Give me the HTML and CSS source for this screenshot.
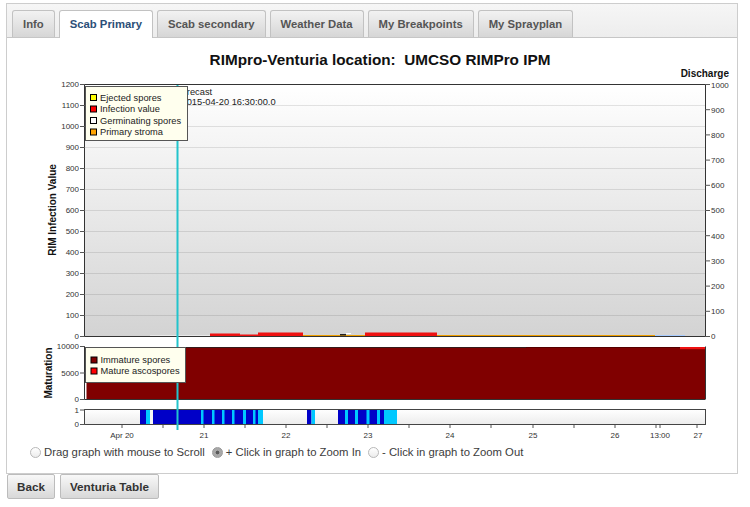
FILE: index.html
```html
<!DOCTYPE html>
<html>
<head>
<meta charset="utf-8">
<title>RIMpro-Venturia</title>
<link rel="stylesheet" href="styles.css">
</head>
<body>
<div class="tabs">
  <ul class="tabnav">
    <li class="tab">Info</li>
    <li class="tab active">Scab Primary</li>
    <li class="tab">Scab secondary</li>
    <li class="tab">Weather Data</li>
    <li class="tab">My Breakpoints</li>
    <li class="tab">My Sprayplan</li>
  </ul>
  <div class="panel">
    <h1 class="title">RIMpro-Venturia location:&nbsp; UMCSO RIMPro IPM</h1>
    <svg class="chart" width="715" height="376" viewBox="20 66 715 376" xmlns="http://www.w3.org/2000/svg">
      <defs>
        <linearGradient id="plotbg" x1="0" y1="0" x2="0" y2="1">
          <stop offset="0" stop-color="#ffffff"/>
          <stop offset="1" stop-color="#d3d3d3"/>
        </linearGradient>
        <linearGradient id="stripbg" x1="0" y1="0" x2="0" y2="1">
          <stop offset="0" stop-color="#ffffff"/>
          <stop offset="1" stop-color="#ececec"/>
        </linearGradient>
      </defs>

      <!-- main plot -->
      <rect x="85" y="84.5" width="620" height="252" fill="url(#plotbg)"/>
      <g class="grid">
        <line x1="85" x2="705" y1="105.5" y2="105.5"/>
        <line x1="85" x2="705" y1="126.5" y2="126.5"/>
        <line x1="85" x2="705" y1="147.5" y2="147.5"/>
        <line x1="85" x2="705" y1="168.5" y2="168.5"/>
        <line x1="85" x2="705" y1="189.5" y2="189.5"/>
        <line x1="85" x2="705" y1="210.5" y2="210.5"/>
        <line x1="85" x2="705" y1="231.5" y2="231.5"/>
        <line x1="85" x2="705" y1="252.5" y2="252.5"/>
        <line x1="85" x2="705" y1="273.5" y2="273.5"/>
        <line x1="85" x2="705" y1="294.5" y2="294.5"/>
        <line x1="85" x2="705" y1="315.5" y2="315.5"/>
      </g>

      <text class="note" x="176" y="91.5" dy="0.35em">Forecast</text>
      <text class="note" x="181.5" y="101.5" dy="0.35em">2015-04-20 16:30:00.0</text>

      <!-- series near zero -->
      <line x1="150" x2="210" y1="336" y2="336" stroke="#ffffff" stroke-width="1"/>
      <rect x="303" y="335" width="134" height="1.5" fill="#f0a000"/>
      <rect x="437" y="335" width="218" height="1.5" fill="#f0a000"/>
      <rect x="655" y="335" width="30" height="1.5" fill="#a8ccff"/>
      <rect x="210" y="333.5" width="30" height="3" fill="#ee1111"/>
      <rect x="240" y="334.5" width="18" height="2" fill="#ee1111"/>
      <rect x="258" y="332.5" width="45" height="4" fill="#ee1111"/>
      <rect x="365" y="332.5" width="72" height="4" fill="#ee1111"/>
      <rect x="340" y="334" width="6" height="1.5" fill="#222222"/>
      <rect x="346" y="333" width="5" height="1" fill="#ffffff"/>

      <g class="axis">
        <line x1="85" x2="705" y1="84.5" y2="84.5"/>
        <line x1="85" x2="705" y1="336.5" y2="336.5"/>
        <line x1="84.5" x2="84.5" y1="84.5" y2="336.5"/>
        <line x1="705.5" x2="705.5" y1="84.5" y2="336.5"/>
      </g>

      <!-- left ticks/labels -->
      <g class="ticks">
        <line x1="80" x2="85" y1="84.5" y2="84.5"/>
        <line x1="80" x2="85" y1="105.5" y2="105.5"/>
        <line x1="80" x2="85" y1="126.5" y2="126.5"/>
        <line x1="80" x2="85" y1="147.5" y2="147.5"/>
        <line x1="80" x2="85" y1="168.5" y2="168.5"/>
        <line x1="80" x2="85" y1="189.5" y2="189.5"/>
        <line x1="80" x2="85" y1="210.5" y2="210.5"/>
        <line x1="80" x2="85" y1="231.5" y2="231.5"/>
        <line x1="80" x2="85" y1="252.5" y2="252.5"/>
        <line x1="80" x2="85" y1="273.5" y2="273.5"/>
        <line x1="80" x2="85" y1="294.5" y2="294.5"/>
        <line x1="80" x2="85" y1="315.5" y2="315.5"/>
        <line x1="80" x2="85" y1="336.5" y2="336.5"/>
      </g>
      <g class="lbl end">
        <text x="79" y="84.5" dy="0.35em">1200</text>
        <text x="79" y="105.5" dy="0.35em">1100</text>
        <text x="79" y="126.5" dy="0.35em">1000</text>
        <text x="79" y="147.5" dy="0.35em">900</text>
        <text x="79" y="168.5" dy="0.35em">800</text>
        <text x="79" y="189.5" dy="0.35em">700</text>
        <text x="79" y="210.5" dy="0.35em">600</text>
        <text x="79" y="231.5" dy="0.35em">500</text>
        <text x="79" y="252.5" dy="0.35em">400</text>
        <text x="79" y="273.5" dy="0.35em">300</text>
        <text x="79" y="294.5" dy="0.35em">200</text>
        <text x="79" y="315.5" dy="0.35em">100</text>
        <text x="79" y="336.5" dy="0.35em">0</text>
      </g>

      <!-- right ticks/labels -->
      <g class="ticks">
        <line x1="705" x2="710" y1="84.5" y2="84.5"/>
        <line x1="705" x2="710" y1="109.7" y2="109.7"/>
        <line x1="705" x2="710" y1="134.9" y2="134.9"/>
        <line x1="705" x2="710" y1="160.1" y2="160.1"/>
        <line x1="705" x2="710" y1="185.3" y2="185.3"/>
        <line x1="705" x2="710" y1="210.5" y2="210.5"/>
        <line x1="705" x2="710" y1="235.7" y2="235.7"/>
        <line x1="705" x2="710" y1="260.9" y2="260.9"/>
        <line x1="705" x2="710" y1="286.1" y2="286.1"/>
        <line x1="705" x2="710" y1="311.3" y2="311.3"/>
        <line x1="705" x2="710" y1="336.5" y2="336.5"/>
      </g>
      <g class="lbl">
        <text x="711" y="85" dy="0.35em">1000</text>
        <text x="711" y="109.7" dy="0.35em">900</text>
        <text x="711" y="134.9" dy="0.35em">800</text>
        <text x="711" y="160.1" dy="0.35em">700</text>
        <text x="711" y="185.3" dy="0.35em">600</text>
        <text x="711" y="210.5" dy="0.35em">500</text>
        <text x="711" y="235.7" dy="0.35em">400</text>
        <text x="711" y="260.9" dy="0.35em">300</text>
        <text x="711" y="286.1" dy="0.35em">200</text>
        <text x="711" y="311.3" dy="0.35em">100</text>
        <text x="711" y="336.5" dy="0.35em">0</text>
      </g>

      <text class="axtitle" x="729" y="73" dy="0.35em" text-anchor="end">Discharge</text>
      <text class="axtitle" x="0" y="0" dy="0.35em" text-anchor="middle" transform="translate(52 210) rotate(-90)">RIM Infection Value</text>

      <!-- maturation plot -->
      <rect x="85" y="346.5" width="620" height="53" fill="#ffffff"/>
      <rect x="86.5" y="347" width="618.5" height="52.5" fill="#800000"/>
      <rect x="86.5" y="347" width="440" height="0.8" fill="#222222"/>
      <rect x="526" y="347" width="154" height="0.6" fill="#3a0000"/>
      <rect x="680" y="347" width="25" height="2.2" fill="#ee1111"/>
      <g class="axis">
        <line x1="84.5" x2="84.5" y1="346.5" y2="399.5"/>
        <line x1="705.5" x2="705.5" y1="346.5" y2="399.5"/>
        <line x1="85" x2="705" y1="399.5" y2="399.5"/>
      </g>
      <g class="ticks">
        <line x1="80" x2="85" y1="346.5" y2="346.5"/>
        <line x1="80" x2="85" y1="373" y2="373"/>
        <line x1="80" x2="85" y1="399.5" y2="399.5"/>
      </g>
      <g class="lbl end">
        <text x="79" y="346.5" dy="0.35em">10000</text>
        <text x="79" y="373" dy="0.35em">5000</text>
        <text x="79" y="399.5" dy="0.35em">0</text>
      </g>
      <text class="axtitle" x="0" y="0" dy="0.35em" text-anchor="middle" transform="translate(48 373) rotate(-90)">Maturation</text>

      <!-- wetness strip -->
      <rect x="85" y="409.5" width="620" height="15" fill="url(#stripbg)"/>
      <g>
        <rect x="140" y="410" width="118" height="14" fill="#0000c8"/>
        <rect x="150" y="410" width="3" height="14" fill="#f6f6f6"/>
        <rect x="146" y="410" width="4" height="14" fill="#00c8ff"/>
        <rect x="201" y="410" width="2.5" height="14" fill="#00c8ff"/>
        <rect x="212" y="410" width="2.5" height="14" fill="#00c8ff"/>
        <rect x="222" y="410" width="2.5" height="14" fill="#00c8ff"/>
        <rect x="232" y="410" width="2.5" height="14" fill="#00c8ff"/>
        <rect x="243" y="410" width="3" height="14" fill="#00c8ff"/>
        <rect x="253" y="410" width="2.5" height="14" fill="#00c8ff"/>
        <rect x="258" y="410" width="5" height="14" fill="#00c8ff"/>
        <rect x="307" y="410" width="4.5" height="14" fill="#0000c8"/>
        <rect x="311.5" y="410" width="3.5" height="14" fill="#00c8ff"/>
        <rect x="338" y="410" width="46" height="14" fill="#0000c8"/>
        <rect x="345" y="410" width="3" height="14" fill="#00c8ff"/>
        <rect x="355" y="410" width="3" height="14" fill="#00c8ff"/>
        <rect x="366.5" y="410" width="3" height="14" fill="#00c8ff"/>
        <rect x="377" y="410" width="3" height="14" fill="#00c8ff"/>
        <rect x="384" y="410" width="13" height="14" fill="#00c8ff"/>
      </g>
      <rect x="84.5" y="409.5" width="621" height="15" fill="none" stroke="#444444" stroke-width="1"/>
      <g class="ticks">
        <line x1="80" x2="85" y1="410" y2="410"/>
        <line x1="80" x2="85" y1="424.5" y2="424.5"/>
      </g>
      <g class="lbl end">
        <text x="79" y="410" dy="0.35em">1</text>
        <text x="79" y="424" dy="0.35em">0</text>
      </g>

      <!-- x axis -->
      <g class="ticks">
        <line x1="122" x2="122" y1="425" y2="428"/>
        <line x1="163" x2="163" y1="425" y2="428"/>
        <line x1="204" x2="204" y1="425" y2="428"/>
        <line x1="245" x2="245" y1="425" y2="428"/>
        <line x1="286" x2="286" y1="425" y2="428"/>
        <line x1="327" x2="327" y1="425" y2="428"/>
        <line x1="368" x2="368" y1="425" y2="428"/>
        <line x1="409" x2="409" y1="425" y2="428"/>
        <line x1="450" x2="450" y1="425" y2="428"/>
        <line x1="491" x2="491" y1="425" y2="428"/>
        <line x1="533" x2="533" y1="425" y2="428"/>
        <line x1="574" x2="574" y1="425" y2="428"/>
        <line x1="615" x2="615" y1="425" y2="428"/>
        <line x1="656" x2="656" y1="425" y2="428"/>
        <line x1="660" x2="660" y1="425" y2="428"/>
        <line x1="697" x2="697" y1="425" y2="428"/>
      </g>
      <g class="lbl mid">
        <text x="122" y="435" dy="0.35em">Apr 20</text>
        <text x="204" y="435" dy="0.35em">21</text>
        <text x="286" y="435" dy="0.35em">22</text>
        <text x="368" y="435" dy="0.35em">23</text>
        <text x="450" y="435" dy="0.35em">24</text>
        <text x="533" y="435" dy="0.35em">25</text>
        <text x="615" y="435" dy="0.35em">26</text>
        <text x="660" y="435" dy="0.35em">13:00</text>
        <text x="698" y="435" dy="0.35em">27</text>
      </g>

      <!-- current time marker -->
      <line x1="177.5" x2="177.5" y1="85" y2="430" stroke="#22c4cc" stroke-width="2"/>

      <!-- legends -->
      <g class="legend">
        <rect x="85.5" y="86.5" width="102" height="54" fill="#ffffee" stroke="#555555"/>
        <rect x="90.5" y="94.5" width="6" height="6" fill="#ffff00" stroke="#000"/>
        <text x="100" y="97.5" dy="0.35em">Ejected spores</text>
        <rect x="90.5" y="106" width="6" height="6" fill="#ff0000" stroke="#000"/>
        <text x="100" y="109" dy="0.35em">Infection value</text>
        <rect x="90.5" y="117.5" width="6" height="6" fill="#ffffff" stroke="#000"/>
        <text x="100" y="120.5" dy="0.35em">Germinating spores</text>
        <rect x="90.5" y="129" width="6" height="6" fill="#ffa500" stroke="#000"/>
        <text x="100" y="132" dy="0.35em">Primary stroma</text>
      </g>
      <g class="legend">
        <rect x="85.5" y="347.5" width="100" height="35" fill="#ffffee" stroke="#555555"/>
        <rect x="91" y="357" width="6" height="6" fill="#800000" stroke="#000"/>
        <text x="100.5" y="360" dy="0.35em">Immature spores</text>
        <rect x="91" y="368" width="6" height="6" fill="#ff0000" stroke="#000"/>
        <text x="100.5" y="371" dy="0.35em">Mature ascospores</text>
      </g>
    </svg>
    <div class="zoom-modes">
      <label class="opt"><span class="radio"></span>Drag graph with mouse to Scroll</label>
      <label class="opt"><span class="radio checked"></span>+ Click in graph to Zoom In</label>
      <label class="opt"><span class="radio"></span>- Click in graph to Zoom Out</label>
    </div>
  </div>
</div>
<div class="buttons">
  <button class="btn">Back</button>
  <button class="btn">Venturia Table</button>
</div>
</body>
</html>
```
FILE: styles.css
```css
html, body {
  margin: 0;
  padding: 0;
  background: #ffffff;
}
body {
  font-family: "Liberation Sans", Arial, sans-serif;
  color: #333333;
}
.tabs {
  box-sizing: border-box;
  width: 732px;
  margin: 3px 0 0 6px;
  border: 1px solid #cdcdcd;
  background: #ffffff;
}
.tabnav {
  list-style: none;
  margin: 0;
  padding: 6px 0 0 5px;
  height: 27px;
  display: flex;
  align-items: flex-start;
  gap: 4px;
  border-bottom: 1px solid #c6c6c6;
  background: linear-gradient(#f6f6f6, #ededed);
}
.tab {
  box-sizing: border-box;
  height: 27px;
  padding: 0 10px;
  line-height: 26px;
  font-size: 11.3px;
  font-weight: bold;
  color: #555555;
  border: 1px solid #c2c2c2;
  border-bottom: none;
  border-radius: 3px 3px 0 0;
  background: linear-gradient(#f2f2f2, #d6d6d6);
  white-space: nowrap;
}
.tab.active {
  height: 28px;
  background: #ffffff;
  color: #2c4f78;
  position: relative;
  z-index: 1;
}
.panel {
  padding: 0 0 11px 0;
}
.title {
  margin: 12px 0 0 0;
  padding-left: 16px;
  height: 16px;
  line-height: 20px;
  text-align: center;
  font-size: 15.3px;
  font-weight: bold;
  color: #111111;
}
.chart {
  display: block;
  margin-left: 13px;
}
.chart text {
  font-family: "Liberation Sans", Arial, sans-serif;
}
.grid line {
  stroke: #000000;
  stroke-opacity: 0.1;
  stroke-width: 1;
}
.axis line {
  stroke: #333333;
  stroke-width: 1;
}
.ticks line {
  stroke: #555555;
  stroke-width: 1;
}
.lbl text {
  font-size: 8px;
  fill: #333333;
}
.lbl.end text {
  text-anchor: end;
}
.lbl.mid text {
  text-anchor: middle;
}
.axtitle {
  font-size: 10px;
  font-weight: bold;
  fill: #111111;
}
.note {
  font-size: 9.3px;
  fill: #222222;
}
.legend text {
  font-size: 9.3px;
  fill: #222222;
}
.zoom-modes {
  height: 20px;
  display: flex;
  align-items: center;
  gap: 7px;
  padding-left: 23px;
  font-size: 11.3px;
  color: #3c3c3c;
}
.opt {
  display: flex;
  align-items: center;
  white-space: nowrap;
}
.radio {
  box-sizing: border-box;
  width: 11px;
  height: 11px;
  margin-right: 3px;
  border-radius: 50%;
  border: 1px solid #b8b8b8;
  background: linear-gradient(#ffffff, #ececec);
}
.radio.checked {
  border-color: #9a9a9a;
  background: radial-gradient(circle, #5a5a5a 0, #5a5a5a 1.6px, #a8a8a8 2.2px, #a8a8a8 100%);
}
.buttons {
  display: flex;
  gap: 5px;
  margin: 0 0 0 7px;
}
.btn {
  box-sizing: border-box;
  height: 25px;
  padding: 0 9px;
  font-family: "Liberation Sans", Arial, sans-serif;
  font-size: 11.7px;
  font-weight: bold;
  color: #333333;
  border: 1px solid #bcbcbc;
  border-radius: 2px;
  background: linear-gradient(#f8f8f8, #d8d8d8);
}
```
